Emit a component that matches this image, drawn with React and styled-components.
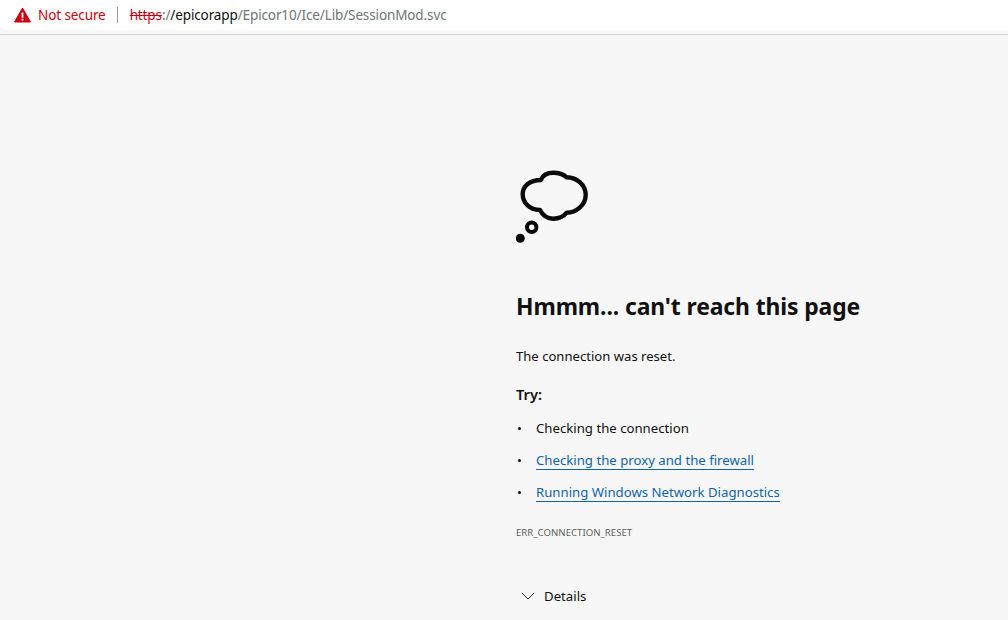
import React from "react";
import styled, { createGlobalStyle } from "styled-components";

const Global = createGlobalStyle`
  html, body { margin: 0; padding: 0; background: #f7f7f7; overflow: hidden; }
  body { font-family: "Noto Sans", "Open Sans", sans-serif; color: #111; }
`;
const Page = styled.div`
  width: 1008px;
  height: 620px;
  overflow: hidden;
  display: flex;
  flex-direction: column;
`;
const Chrome = styled.div`
  height: 35px;
  flex: none;
  box-sizing: border-box;
  border-bottom: 1px solid #d6d6d6;
`;
const Bar = styled.header`
  height: 30px;
  background: #fff;
  border-bottom-left-radius: 6px;
  display: flex;
  align-items: center;
  padding-left: 14px;
  font-size: 13.5px;
  letter-spacing: -0.1px;
`;
const Secure = styled.span`
  color: #cc0011;
  margin-left: 7px;
`;
const Divider = styled.span`
  width: 1px;
  height: 16px;
  background: #9a9a9a;
  margin: 0 12px 0 11px;
`;
const Url = styled.span`
  color: #6e7478;
  white-space: nowrap;
  letter-spacing: -0.12px;
`;
const Strike = styled.span`
  color: #cc0011;
  text-decoration: line-through;
`;
const Host = styled.span`
  color: #111;
`;
const Main = styled.main`
  padding: 133px 0 0 516px;
  display: flex;
  flex-direction: column;
  align-items: flex-start;
`;
const Cloud = styled.svg`
  display: block;
  width: 76px;
  height: 76px;
`;
const Title = styled.h1`
  margin: 47px 0 0;
  font-size: 22.9px;
  line-height: 32px;
  font-weight: 700;
  white-space: nowrap;
  letter-spacing: -0.1px;
`;
const Message = styled.p`
  margin: 24px 0 0;
  font-size: 13.1px;
  line-height: 18px;
`;
const Try = styled.p`
  margin: 19px 0 0;
  font-size: 14.7px;
  line-height: 20px;
  font-weight: 600;
`;
const List = styled.ul`
  list-style: none;
  margin: 14px 0 0;
  padding: 0;
  display: flex;
  flex-direction: column;
  gap: 12px;
`;
const Item = styled.li`
  position: relative;
  height: 20px;
  padding-left: 20px;
  font-size: 13.2px;
  line-height: 20px;
  &::before {
    content: "";
    position: absolute;
    left: 2px;
    top: 9px;
    width: 3px;
    height: 3px;
    border-radius: 50%;
    background: #111;
  }
`;
const Link = styled.a`
  color: #0f65ad;
  display: inline-block;
  vertical-align: top;
  line-height: 20px;
  height: 20px;
  box-sizing: border-box;
  border-bottom: 1px solid #0f65ad;
`;
const Code = styled.div`
  margin-top: 24px;
  font-size: 9.65px;
  line-height: 14px;
  color: #5e5e5e;
`;
const Details = styled.div`
  margin-top: 46px;
  display: flex;
  align-items: center;
  gap: 9px;
  padding-left: 5px;
  font-size: 13.2px;
  line-height: 20px;
`;

export default function App() {
  return (
    <Page>
      <Global />
      <Chrome>
        <Bar>
          <svg width="17" height="16" viewBox="0 0 17 16">
            <path d="M8.5 1 L16.5 15 L0.5 15 Z" fill="#cc0011" stroke="#cc0011" strokeLinejoin="round" strokeWidth="1" />
            <rect x="7.6" y="5.5" width="1.8" height="5.2" fill="#fff" />
            <rect x="7.6" y="11.7" width="1.8" height="1.8" fill="#fff" />
          </svg>
          <Secure>Not secure</Secure>
          <Divider />
          <Url>
            <Strike>https</Strike>:/<Host>/epicorapp</Host>/Epicor10/Ice/Lib/SessionMod.svc
          </Url>
        </Bar>
      </Chrome>
      <Main>
        <Cloud viewBox="0 0 76 76" fill="none">
          <path
            d="M24.7 12 C27 7 32 4.8 37.3 4.8 C43 4.8 47.5 6.5 50.7 9.3 C61 9.5 69.7 17 69.7 27 C69.7 37 60 44.7 50.7 44.7 C47.5 48.7 43 50.7 37.3 50.7 C31 50.7 26.5 47 24 42 C14 42 6.7 35 6.7 26.3 C6.7 18 14 12 24.7 12 Z"
            stroke="#0a0a0a"
            strokeWidth="4.4"
            strokeLinejoin="round"
          />
          <circle cx="15.7" cy="59.3" r="4.7" stroke="#0a0a0a" strokeWidth="4" />
          <circle cx="4.3" cy="70.3" r="4.5" fill="#0a0a0a" />
        </Cloud>
        <Title>Hmmm... can't reach this page</Title>
        <Message>The connection was reset.</Message>
        <Try>Try:</Try>
        <List>
          <Item>Checking the connection</Item>
          <Item><Link>Checking the proxy and the firewall</Link></Item>
          <Item><Link>Running Windows Network Diagnostics</Link></Item>
        </List>
        <Code>ERR_CONNECTION_RESET</Code>
        <Details>
          <svg width="14" height="8" viewBox="0 0 14 8" fill="none">
            <path d="M0.8 0.8 L7 7 L13.2 0.8" stroke="#333" strokeWidth="1" />
          </svg>
          Details
        </Details>
      </Main>
    </Page>
  );
}
